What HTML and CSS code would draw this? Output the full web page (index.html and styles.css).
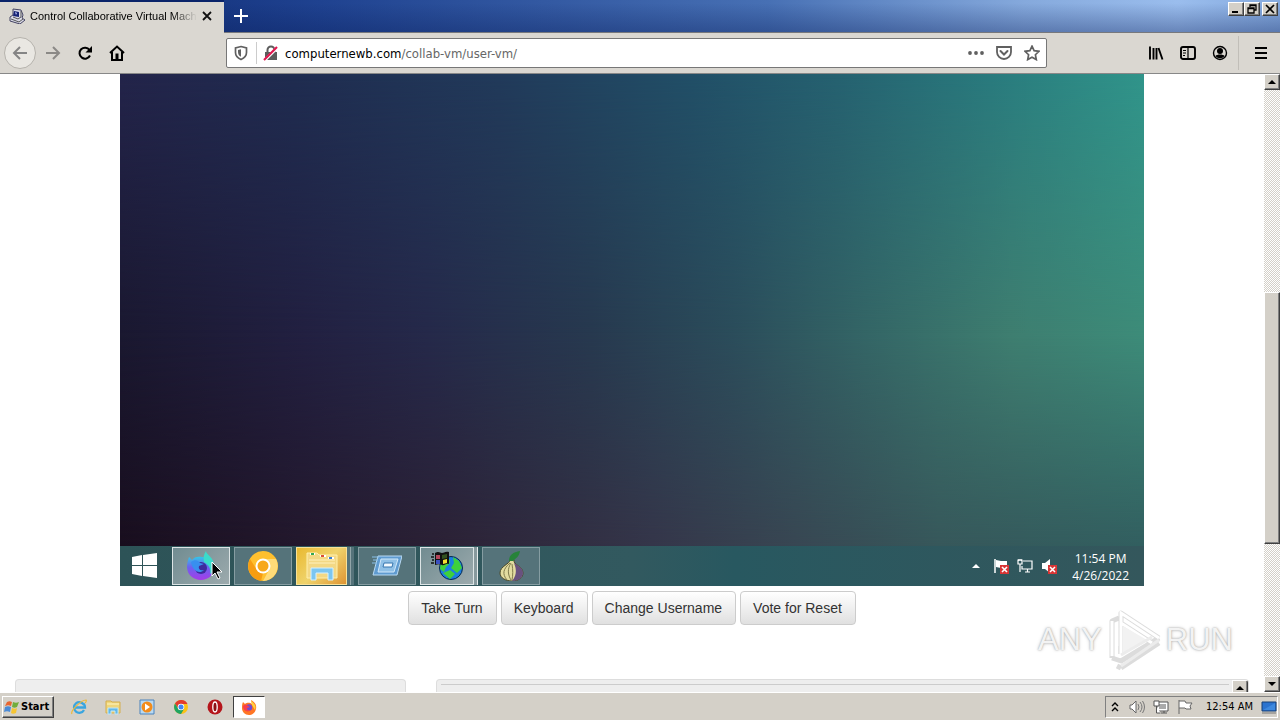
FILE: index.html
```html
<!DOCTYPE html>
<html lang="en">
<head>
<meta charset="utf-8">
<title>Control Collaborative Virtual Machines</title>
<link rel="stylesheet" href="styles.css">
</head>
<body>
<header class="titlebar">
  <div class="tab">
    <svg class="i16" viewBox="0 0 16 16"><path d="M4 1l8 1 2 5-1 3 3 2-5 4-10-3V9l3-2z" fill="#d9d9e6" stroke="#444463"/><path d="M5 3l5 1v5L4 8z" fill="#172375"/><path d="M6 4l2 1-1 2z" fill="#c3ceff"/><path d="M12 3v6l-3 2-5-2M2 11l8 3 4-3" fill="none" stroke="#555"/></svg>
    <span class="tab-title">Control Collaborative Virtual Machi</span>
    <button class="bare" aria-label="Close tab"><svg class="i12" viewBox="0 0 12 12"><path d="M2 2l8 8M10 2l-8 8" stroke="#111" stroke-width="1.8"/></svg></button>
  </div>
  <button class="bare new-tab" aria-label="New tab"><svg class="i16" viewBox="0 0 16 16"><path d="M8 1v14M1 8h14" stroke="#fff" stroke-width="2"/></svg></button>
  <div class="window-buttons">
    <button class="bevel" aria-label="Minimize"><svg class="i12" viewBox="0 0 12 12"><path d="M2 9h6" stroke="#000" stroke-width="2"/></svg></button>
    <button class="bevel" aria-label="Restore"><svg class="i12" viewBox="0 0 12 12"><path d="M4 4V2h6v5H8M4 2.500h6M2 5h6v5H2zM2 5.500h6" fill="none" stroke="#000" stroke-width="1.300"/></svg></button>
    <button class="bevel close" aria-label="Close"><svg class="i12" viewBox="0 0 12 12"><path d="M2 2l8 8M10 2l-8 8" stroke="#000" stroke-width="1.700"/></svg></button>
  </div>
</header>

<nav class="toolbar">
  <button class="tool back" aria-label="Back"><svg class="i16" viewBox="0 0 16 16"><path d="M15 8H2M8 2L2 8l6 6" fill="none" stroke="#858585" stroke-width="2"/></svg></button>
  <button class="tool" aria-label="Forward"><svg class="i16" viewBox="0 0 16 16"><path d="M1 8h13M8 2l6 6-6 6" fill="none" stroke="#8b8986" stroke-width="2"/></svg></button>
  <button class="tool" aria-label="Reload"><svg class="i16" viewBox="0 0 16 16"><path d="M12.500 5A5.500 5.500 0 1 0 13 10.500" fill="none" stroke="#000" stroke-width="2"/><path d="M15 1v6.500H8.500z"/></svg></button>
  <button class="tool" aria-label="Home"><svg class="i16" viewBox="0 0 16 16"><path d="M1 8l7-6.500L15 8M3 7v8h10V7" fill="none" stroke="#000" stroke-width="2"/><path d="M6.500 8.500h3V15h-3z"/></svg></button>
  <div class="urlbar">
    <svg class="i16" viewBox="0 0 16 16"><path d="M8 1.500l5.500 1.300v4.700c0 3.500-2 5.500-5.500 7-3.500-1.500-5.500-3.500-5.500-7V2.800z" fill="none" stroke="#606060" stroke-width="1.700"/><path d="M8 4.200v7.600c-2-1-3-2.500-3-4.800V5z" fill="#606060"/></svg>
    <span class="url-sep"></span>
    <svg class="i16" viewBox="0 0 16 16"><path d="M4.500 8V5a3.500 3.500 0 0 1 7 0v3" fill="none" stroke="#5c5c5c" stroke-width="2"/><path d="M2 7h12v8H2z" fill="#5c5c5c"/><path d="M2 15L15 2" stroke="#fff" stroke-width="3"/><path d="M1 15L14 2" stroke="#e0164e" stroke-width="2.200"/></svg>
    <a class="url" href="#"><span class="host">computernewb.com</span>/collab-vm/user-vm/</a>
    <div class="url-actions">
      <button class="bare" aria-label="Page actions"><svg class="i16" viewBox="0 0 16 16" fill="#606060"><circle cx="2" cy="8" r="1.900"/><circle cx="8" cy="8" r="1.900"/><circle cx="14" cy="8" r="1.900"/></svg></button>
      <button class="bare" aria-label="Save to Pocket"><svg class="i16" viewBox="0 0 16 16" fill="none" stroke="#606060" stroke-width="2"><path d="M1 2h14v5a7 7 0 0 1-14 0z" stroke-width="1.800"/><path d="M4.500 6L8 9.500 11.500 6" stroke-linecap="round"/></svg></button>
      <button class="bare" aria-label="Bookmark"><svg class="i16" viewBox="0 0 16 16"><path d="M8 1.200l2.100 4.500 4.900.6-3.600 3.400.9 4.900L8 12.200l-4.300 2.400.9-4.900L1 6.300l4.900-.6z" fill="none" stroke="#606060" stroke-width="1.700"/></svg></button>
    </div>
  </div>
  <button class="tool" aria-label="Library"><svg class="i16" viewBox="0 0 16 16"><path d="M2 1.500v13M5.500 3v11.500M8.500 3v11.500M10.500 3l4 11.500" stroke="#000" stroke-width="1.900"/></svg></button>
  <button class="tool" aria-label="Sidebars"><svg class="i16" viewBox="0 0 16 16"><rect x="1" y="2" width="14" height="12" rx="2" fill="none" stroke="#000" stroke-width="1.900"/><path d="M8 2v12M3 5.500h3M3 8h3M3 10.500h2" stroke="#000" stroke-width="1.200"/></svg></button>
  <button class="tool" aria-label="Account"><svg class="i16" viewBox="0 0 16 16"><circle cx="8" cy="8" r="6.500" fill="none" stroke="#000" stroke-width="1.400"/><circle cx="8" cy="6" r="3"/><path d="M3.500 11c1-2 8-2 9 0-2 3-7 3-9 0z"/></svg></button>
  <span class="tool-sep"></span>
  <button class="tool" aria-label="Menu"><svg class="i16" viewBox="0 0 16 16"><path d="M2 3h12M2 8h12M2 13h12" stroke="#000" stroke-width="2"/></svg></button>
</nav>

<div class="viewport">
  <main class="page">
    <section class="vm">
      <div class="wallpaper"></div>
      <div class="vm-taskbar">
        <button class="vm-start" aria-label="Start"><svg class="i28" viewBox="0 0 28 28" fill="#fff"><path d="M2 5l10-2v10H2zM13 3l14-2v12H13zM2 14h10v10L2 22zM13 14h14v12l-14-2z"/></svg></button>
        <button class="app lit" aria-label="Firefox Nightly"><svg class="i30" viewBox="0 0 30 30"><defs><linearGradient id="ng" x1="0" y1="0" x2="0" y2="1"><stop offset="0" stop-color="#31c9e8"/><stop offset=".45" stop-color="#6b62f0"/><stop offset="1" stop-color="#a63be8"/></linearGradient></defs><path d="M3 6l3 3c2-3 6-4 10-3 6 0 12 4 12 11s-6 12-13 12S1 24 1 16c0-4 1-7 2-10z" fill="url(#ng)"/><path d="M20 0c0 4 9 6 8 17-1 3-2 5-4 6 1-5-1-9-6-12-1-5 0-8 2-11z" fill="#3bdccb"/><circle cx="15" cy="17" r="6" fill="#3e2b9d"/><path d="M5 11c4-3 7-2 9 1l4 1-5 2c-1 3 1 5 5 4-5 5-12 0-13-8z" fill="#388fef"/></svg>
          <svg class="cursor" viewBox="0 0 12 19"><path d="M1 1v14l3-3 3 6 2-1-3-6h5z" fill="#000" stroke="#fff"/></svg></button>
        <button class="app" aria-label="Chrome Canary"><svg class="i30" viewBox="0 0 30 30"><circle cx="15" cy="15" r="15" fill="#ffc02e"/><path d="M15 8h13A15 15 0 0 1 15 30l6-11z" fill="#ffdb78"/><path d="M2 8l7 11 6 3-2 8A15 15 0 0 1 2 8z" fill="#f79d12"/><circle cx="15" cy="15" r="7.500" fill="#fff"/><circle cx="15" cy="15" r="5.500" fill="#f7a81b"/></svg></button>
        <button class="app gold" aria-label="File Explorer"><svg class="i32" viewBox="0 0 32 32"><path d="M1 3h10l2 2h18v23H1z" fill="#f3d884" stroke="#fff0ac"/><path d="M4 4h5M14 6h6M22 8h6" stroke="#fff" stroke-width="2"/><path d="M5 4h3" stroke="#34a853" stroke-width="2"/><path d="M15 6h3" stroke="#d84e3a" stroke-width="2"/><path d="M23 8h3" stroke="#397fd1" stroke-width="2"/><path d="M3 10h26M3 13h26" stroke="#fff1bd"/><path d="M5 30V18h22v12h-5v-7H10v7z" fill="#7cc6f0" stroke="#d6f1ff"/></svg></button>
        <button class="app" aria-label="Run"><svg class="i30" viewBox="0 0 30 30"><path d="M6 5h24l-5 19H1z" fill="#5f9bd0" stroke="#b9daf3"/><path d="M9 8h17l-4 13H6z" fill="#8fc0e6" stroke="#d1e8fa"/><path d="M12 12h9l-1 4h-9z" fill="#f1f9ff" stroke="#3776af"/><path d="M0 6h7M1 9h5M0 12h5" stroke="#8ac0e8"/></svg></button>
        <button class="app lit stack" aria-label="Windows Update"><svg class="i32" viewBox="0 0 32 32"><circle cx="20" cy="18" r="11.500" fill="#1b7ee0" stroke="#06284e"/><path d="M10 12c6-6 10-3 9 1l-4 4-2 5-4-3zM22 7l6 4 3 7-5 5-6-5 3-5zM12 23l7-3 5 4-5 5z" fill="#3ed03c"/><path d="M4 3c4-2 5 0 7 0s3-2 7-1v12c-3-1-5 2-7 1s-4-1-7 0z" fill="#111"/><path d="M1 4h2M0 7h3M1 10h2M0 13h3" stroke="#111" stroke-width="1.500"/><path d="M5 5h4v4H5z" fill="#b3465a"/><path d="M11 5l5-1v4l-5 1z" fill="#31511f"/><path d="M5 10h4v4H5z" fill="#3b50c0"/><path d="M12 10l4-1v4l-4 1z" fill="#f2df32"/></svg></button>
        <button class="app" aria-label="Tor Browser"><svg class="i30" viewBox="0 0 30 30"><path d="M14 9c0 4-10 6-10 13 0 5 6 8 12 8s11-3 11-8c0-7-10-8-9-13z" fill="#e3dca0" stroke="#4b4827"/><path d="M17 10c3 6 5 13-1 20 6 0 11-3 11-8 0-7-9-8-10-12z" fill="#69517f"/><path d="M14 12c-7 6-8 11-3 17M15 12c-4 6-3 12 0 17M16 13c1 6 1 11 0 16" fill="none" stroke="#817b4c"/><path d="M13 10c0-6 4-9 11-10-1 6-4 7-7 10z" fill="#27833a"/></svg></button>
        <div class="vm-tray">
          <svg class="i12 caret" viewBox="0 0 12 12"><path d="M2 8l4-4 4 4z" fill="#fff"/></svg>
          <svg class="i16" viewBox="0 0 16 16"><path d="M2 1v14" stroke="#fff" stroke-width="1.500"/><path d="M3 2l5 1h6v7H8L3 9z" fill="#fff"/><path d="M7 7h9v9H7z" fill="#d83535"/><path d="M9 9l5 5M14 9l-5 5" stroke="#fff" stroke-width="1.600"/></svg>
          <svg class="i16" viewBox="0 0 16 16" fill="none" stroke="#fff" stroke-width="1.200"><path d="M6 3h9v8H5V8M8 14h5M10.500 11v3M1 2h4v4H1zM3 6v8M2 1v2M4 1v2"/></svg>
          <svg class="i16" viewBox="0 0 16 16"><path d="M1 5h3l5-4v14l-5-4H1z" fill="#fff"/><path d="M7 7h9v9H7z" fill="#d83535"/><path d="M9 9l5 5M14 9l-5 5" stroke="#fff" stroke-width="1.500"/></svg>
          <div class="vm-clock"><span>11:54 PM</span><span>4/26/2022</span></div>
        </div>
      </div>
    </section>
    <div class="controls">
      <button class="btn">Take Turn</button>
      <button class="btn">Keyboard</button>
      <button class="btn">Change Username</button>
      <button class="btn">Vote for Reset</button>
    </div>
    <div class="panels">
      <div class="panel"></div>
      <div class="panel chat"><div class="chat-log"></div><button class="bevel scroll-btn" aria-label="Scroll chat up"><svg class="i12" viewBox="0 0 12 12"><path d="M2 8l4-4 4 4z"/></svg></button></div>
    </div>
    <div class="watermark">
      <span>ANY</span>
      <svg class="play" viewBox="0 0 60 64"><g fill="none" stroke="#dcdcdc" stroke-width="5" stroke-linejoin="round"><path d="M17 46V5l38 25M8 50V13l7-3M17 15l31 20"/><path d="M17 46v-8M8 50l9 3 38-23M17 60l38-25M17 60l-4-2"/></g><path d="M17 46V5l38 25M8 48V13M17 15l31 20" fill="none" stroke="#fff" stroke-width="3"/><path d="M19 18l24 14-24 14z" fill="#f2f2f2"/><path d="M17 47l31-18M17 58l38-26" stroke="#ececec" stroke-width="3"/></svg>
      <span>RUN</span>
    </div>
  </main>
  <div class="scrollbar">
    <button class="bevel scroll-btn" aria-label="Scroll up"><svg class="i12" viewBox="0 0 12 12"><path d="M2 8l4-4 4 4z"/></svg></button>
    <div class="track-before"></div>
    <div class="thumb bevel"></div>
    <div class="track-after"></div>
    <button class="bevel scroll-btn" aria-label="Scroll down"><svg class="i12" viewBox="0 0 12 12"><path d="M2 4l4 4 4-4z"/></svg></button>
  </div>
</div>

<footer class="taskbar">
  <button class="start bevel"><svg class="i16" viewBox="0 0 16 16"><path d="M3 3c2-1 3-1 5 0L7 7C5 6 4 6 1 7z" fill="#e86631"/><path d="M9 3c2 1 4 1 6 0l-2 5c-2 1-3 1-5 0z" fill="#72ad3c"/><path d="M1 8c2-1 4-1 6 0l-1 5c-2-1-4-1-6 0z" fill="#4b8bd6"/><path d="M8 9c2 1 4 1 5 0l-1 5c-2 1-4 1-5 0z" fill="#f6c532"/></svg>Start</button>
  <button class="quick" aria-label="Internet Explorer"><svg class="i16" viewBox="0 0 16 16"><path d="M13 6A5.300 5.300 0 1 0 13 11M4 8.500h10c0-2-.5-3-1.500-4" fill="none" stroke="#3aa5df" stroke-width="2.300"/><path d="M1 15C-1 12 10 1 15 1c1 1 0 2-1 3" fill="none" stroke="#edb93a" stroke-width="1.200"/></svg></button>
  <button class="quick" aria-label="Explorer"><svg class="i16" viewBox="0 0 16 16"><path d="M1 2h5l1 1h8v11H1z" fill="#efd67b" stroke="#d4ad4f"/><path d="M2 5h12" stroke="#fff5c2"/><path d="M3 15V9h10v6h-3v-3H6v3z" fill="#62b8e8" stroke="#bde6fb"/></svg></button>
  <button class="quick" aria-label="Media Player"><svg class="i16" viewBox="0 0 16 16"><path d="M1 1h14v14H1z" fill="#b8d9f2" stroke="#4b83bd"/><circle cx="8" cy="8" r="5.500" fill="#f28c1c"/><path d="M6 4.500l5 3.500-5 3.500z" fill="#fff"/></svg></button>
  <button class="quick" aria-label="Chrome"><svg class="i16" viewBox="0 0 16 16"><circle cx="8" cy="8" r="7" fill="#fbc116"/><path d="M2 4.500A7 7 0 0 1 14.500 5H8l-3 4z" fill="#e33b2e"/><path d="M2 4.500A7 7 0 0 0 8 15l3-5-5 1z" fill="#1fa463"/><circle cx="8" cy="8" r="3.300" fill="#fff"/><circle cx="8" cy="8" r="2.500" fill="#4285f4"/></svg></button>
  <button class="quick" aria-label="Opera"><svg class="i16" viewBox="0 0 16 16"><circle cx="8" cy="8" r="7.500" fill="#b5151b"/><ellipse cx="8" cy="8" rx="2.200" ry="5" fill="#8d1014" stroke="#fff" stroke-width="1.300"/></svg></button>
  <button class="running" aria-label="Firefox"><svg class="i16" viewBox="0 0 16 16"><path d="M2 3l2 2c3-2 5-1 7 0l-1-4c3 2 6 4 5 9-1 4-4 6-7 6-4 0-7-3-7-7 0-2 0-4 1-6z" fill="#ff7624"/><path d="M10 1c2 3 6 5 4 10l-3-5z" fill="#ffd23d"/><circle cx="8" cy="8.500" r="3.200" fill="#714bd0"/><path d="M2 7c2-2 4-1 5 0l2 1-3 1c0 2 2 3 4 2-3 3-8 1-8-4z" fill="#f63e4e"/></svg></button>
  <div class="tray">
    <svg class="i12" viewBox="0 0 12 12"><path d="M3 5l3-3 3 3M3 10l3-3 3 3" fill="none" stroke="#000" stroke-width="1.400"/></svg>
    <svg class="i16" viewBox="0 0 16 16"><path d="M1 6h2l4-4v12l-4-4H1z" fill="#fff" stroke="#666"/><path d="M9 5q2 3 0 6M11 3q4 5 0 10M13.500 2q4 6 0 12" fill="none" stroke="#777"/></svg>
    <svg class="i16" viewBox="0 0 16 16"><path d="M4 3h11v9H4z" fill="#fff" stroke="#555"/><path d="M6 5h7v5H6z" fill="#aaa"/><path d="M8 14h6M11 12v2M1 2h5v5H1zM3.500 7v7h4" fill="#fff" stroke="#555"/></svg>
    <svg class="i16" viewBox="0 0 16 16"><path d="M2 1v14M2 2h6l1 2h6l-2 3 1 3H9L8 9H2" fill="#fff" stroke="#666"/></svg>
    <time class="clock">12:54 AM</time>
    <svg class="i16" viewBox="0 0 16 16"><path d="M1 3h14v9H1z" fill="#2b73cf" stroke="#174176"/><path d="M2 11L14 4v7z" fill="#3e89de"/><path d="M1 14h14" stroke="#777"/></svg>
  </div>
</footer>
</body>
</html>
```
FILE: styles.css
```css
* { box-sizing: border-box; }
body { margin: 0; height: 100vh; display: flex; flex-direction: column; overflow: hidden; background: #fff; color: #000; font-family: "DejaVu Sans Condensed", "DejaVu Sans", sans-serif; font-size: 11px; }
button { font: inherit; color: inherit; padding: 0; border: 0; }
svg { display: block; flex: none; }
.i12 { width: 12px; height: 12px; }
.i16 { width: 16px; height: 16px; }
.i28 { width: 28px; height: 28px; }
.i30 { width: 30px; height: 30px; }
.i32 { width: 32px; height: 32px; }
.bare { background: none; display: flex; align-items: center; justify-content: center; }
.bevel { background: #d4d0c8; border: 1px solid; border-color: #fff #404040 #404040 #fff; box-shadow: inset -1px -1px #808080; }

.titlebar { flex: none; display: flex; height: 33px; background: linear-gradient(transparent 10%, rgba(10, 30, 90, .35)), linear-gradient(90deg, #0a246a, #1f4290 25%, #4770b4 60%, #85a9dc 80%, #9abded 92%, #85aade); border-bottom: 1px solid #77787c; }
.tab { width: 224px; height: 33px; padding: 0 11px 3px 9px; border-top: 2px solid #0a246a; background: #dad7d1; display: flex; align-items: center; }
.tab-title { flex: 1; min-width: 0; margin: 0 4px 0 5px; white-space: nowrap; font-family: "Liberation Sans", Arial, sans-serif; mask-image: linear-gradient(90deg, #000 85%, transparent); }
.new-tab { width: 34px; }
.window-buttons { display: flex; margin: 2px 2px 0 auto; height: 14px; }
.window-buttons .bevel { width: 16px; display: flex; align-items: center; justify-content: center; }
.window-buttons .close { margin-left: 2px; }

.toolbar { flex: none; display: flex; align-items: center; height: 41px; padding: 0 3px 0 4px; background: #dad7d1; border-bottom: 1px solid #888; }
.tool { width: 32px; height: 32px; background: none; display: flex; align-items: center; justify-content: center; }
.back { background: #e9e7e2; border: 1px solid #b5b2ac; border-radius: 50%; margin-right: 1px; }
.urlbar { flex: 1; display: flex; align-items: center; height: 30px; margin: 0 93px; padding: 0 6px; background: #fff; border: 1px solid #777; border-radius: 2px; }
.url-sep { width: 1px; height: 22px; background: #ccc; margin: 0 6px 0 7px; }
.url { flex: 1; margin-left: 6px; color: #666; text-decoration: none; font-size: 13px; white-space: nowrap; }
.host { color: #000; }
.url-actions { display: flex; gap: 12px; }
.tool-sep { width: 1px; height: 34px; margin: 0 6px 0 2px; background: #c1beb8; }

.viewport { flex: 1; min-height: 0; display: flex; }
.page { position: relative; flex: 1; min-width: 0; display: flex; flex-direction: column; overflow: hidden; }
.vm { flex: 1; min-height: 0; margin: 0 120px; display: flex; flex-direction: column; }
.wallpaper { flex: 1; position: relative; background: linear-gradient(90deg, #190e1e, #22172b 16%, #2c2236 32%, #35364a 52%, #384753 66%, #37585b 80%, #325f60); }
.wallpaper::before, .wallpaper::after { content: ""; position: absolute; inset: 0; }
.wallpaper::before { background: linear-gradient(90deg, #1a1830, #222041 18%, #25294a 30%, #27394f 46%, #2b4d5b 60%, #346666 73%, #3e7e70 87%, #3d8c79); mask-image: linear-gradient(#000 55%, transparent); }
.wallpaper::after { background: linear-gradient(90deg, #23244a, #1f2c50 17%, #213a5a 37%, #214f67 56%, #256170 70%, #297a7d 85%, #30948a); mask-image: linear-gradient(#000, transparent 55%); }
.vm-taskbar { flex: none; height: 40px; display: flex; align-items: center; gap: 4px; background: linear-gradient(90deg, #2d5357, #32595f 50%, #285860 60%, #34575c); color: #fff; }
.vm-start { width: 48px; background: none; display: flex; justify-content: center; }
.app { position: relative; width: 58px; height: 38px; display: flex; align-items: center; justify-content: center; background: #55737a; border: 1px solid #869da2; }
.lit { background: linear-gradient(135deg, #718c91, #9caaad); border-color: #dce4e5; }
.gold { width: 51px; margin-right: 7px; background: linear-gradient(135deg, #e9b92f, #efd36c 50%, #df9534); border-color: #f7e19a; box-shadow: 3px 0 #55737a, 4px 0 #91a5a8, 7px 0 #55737a; }
.stack { width: 54px; margin-right: 4px; box-shadow: 3px 0 #87999d, 4px 0 #e5ebec; }
.cursor { position: absolute; left: 38px; top: 13px; width: 12px; height: 19px; }
.vm-tray { margin-left: auto; padding-right: 15px; display: flex; align-items: center; gap: 8px; }
.caret { margin-right: 3px; }
.vm-clock { display: flex; flex-direction: column; align-items: center; margin-left: 7px; padding-top: 1px; font: 12px/17px "Open Sans", sans-serif; }

.controls { flex: none; display: flex; justify-content: center; gap: 4px; padding: 5px 0 54px; }
.btn { height: 34px; padding: 0 13px 0 12px; font: 14px "Liberation Sans", Arial, sans-serif; color: #333; background: linear-gradient(#fff, #e0e0e0); border: 1px solid #ccc; border-radius: 4px; }
.panels { flex: none; height: 13px; display: grid; grid-template-columns: 391fr 813fr; gap: 30px; padding: 0 15px; }
.panel { background: #eee; border: 1px solid #ddd; border-bottom: 0; border-radius: 4px 4px 0 0; }
.chat { display: flex; overflow: hidden; }
.chat-log { flex: 1; margin: 4px 3px 0 4px; border-top: 1px solid #ccc; }
.scroll-btn { flex: none; width: 16px; height: 16px; display: flex; align-items: center; justify-content: center; }
.watermark { position: absolute; right: 31px; bottom: 20px; display: flex; align-items: center; gap: 2px; color: #f3f3f3; font: 31px/64px "Liberation Sans", sans-serif; text-shadow: 0 0 2px #999, 0 0 4px #ddd; }
.play { width: 60px; height: 64px; }
.scrollbar { flex: none; width: 16px; display: flex; flex-direction: column; background: repeating-conic-gradient(#d4d0c8 0 25%, #fff 0 50%) 0 0 / 2px 2px; }
.track-before { flex: 203; }
.thumb { flex: 251; }
.track-after { flex: 132; }

.taskbar { flex: none; height: 28px; display: flex; align-items: center; padding: 0 2px; background: #d4d0c8; border-top: 1px solid #fff; }
.start { display: flex; align-items: center; gap: 1px; height: 22px; width: 52px; margin-right: 8px; padding-left: 1px; font-weight: bold; }
.quick { width: 34px; height: 22px; background: none; display: flex; align-items: center; justify-content: center; }
.running { width: 32px; height: 22px; margin-left: 1px; background: #fff; border: 1px solid; border-color: #404040 #fff #fff #404040; display: flex; align-items: center; justify-content: center; }
.tray { margin-left: auto; height: 22px; display: flex; align-items: center; gap: 8px; padding: 0 0 0 3px; border: 1px solid; border-color: #808080 #fff #fff #808080; }
.clock { margin-left: 5px; }
```
